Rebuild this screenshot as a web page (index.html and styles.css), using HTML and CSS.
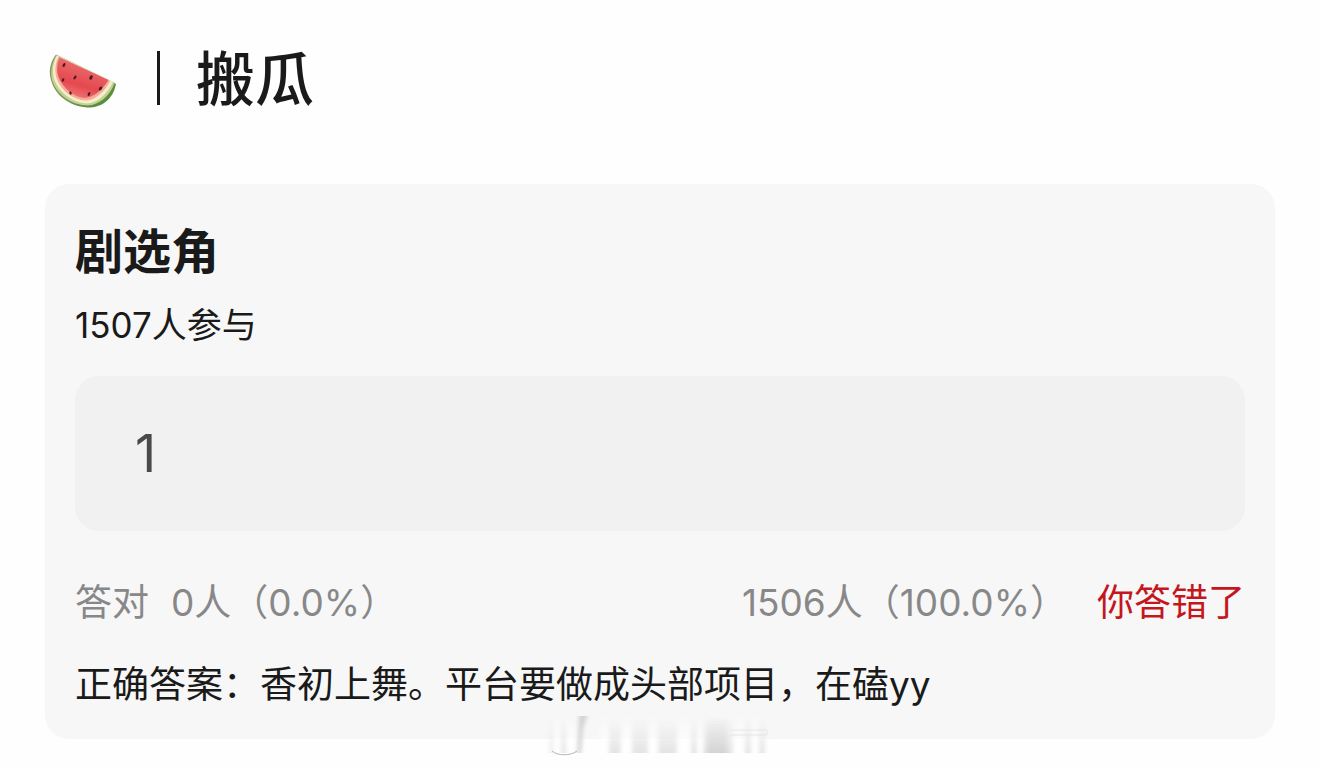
FILE: index.html
```html
<!DOCTYPE html>
<html lang="zh-CN">
<head>
    <meta charset="UTF-8">
    <meta name="viewport" content="width=device-width, initial-scale=1.0">
    <title>搬瓜</title>
    <link rel="stylesheet" href="styles.css">
</head>
<body>
    <header class="page-header">
        <svg class="melon" viewBox="1 -1 80 70" aria-hidden="true">
            <defs>
                <linearGradient id="rind" x1="0" y1="0" x2="1" y2="1">
                    <stop offset="0" stop-color="#8a9a65"/>
                    <stop offset="0.5" stop-color="#739a50"/>
                    <stop offset="1" stop-color="#4a8a30"/>
                </linearGradient>
                <linearGradient id="flesh" x1="0.6" y1="0.2" x2="0.3" y2="1">
                    <stop offset="0" stop-color="#e9696a"/>
                    <stop offset="0.6" stop-color="#e5484f"/>
                    <stop offset="1" stop-color="#f07a74"/>
                </linearGradient>
            </defs>
            <path fill="url(#rind)" d="M12 8.500C7 15 4 24 7 34C11 49 25 60 43 61.500C57 62 69 54 72 38L67 35Z"/>
            <path fill="#c3cf95" d="M12.500 9C8 17 6 25 8 34C13 49 27 59 44 59.500C55 59 66 50 70.500 37Z"/>
            <path fill="#f7edc9" d="M13 9.500C9 17 8 25 10 33C15 47 29 57 43 57.500C54 57 64 47 69 36Z"/>
            <path fill="#f5aa9a" d="M14.500 10.500C11 18 10.500 25 12.500 32C17.500 45 29 54 42 54.500C52 54 61 45 66 35Z"/>
            <path fill="url(#flesh)" d="M15.500 11.500C12.500 19 12.500 25 14.500 31C19.500 43 30 51.500 41 52C50 51.500 59 43 64.500 34Z"/>
            <g fill="#4c1d20">
                <ellipse cx="20" cy="19" rx="1.300" ry="2.200" transform="rotate(25 20 19)"/>
                <ellipse cx="31" cy="31.500" rx="1.200" ry="2.200" transform="rotate(30 31 31.500)"/>
                <ellipse cx="47" cy="31.500" rx="1.500" ry="2.400" transform="rotate(25 47 31.500)"/>
                <ellipse cx="19" cy="34" rx="1.100" ry="1.900" transform="rotate(25 19 34)"/>
                <ellipse cx="56.500" cy="42.500" rx="1.400" ry="2.300" transform="rotate(40 56.500 42.500)"/>
                <ellipse cx="45" cy="48" rx="1.200" ry="2.100" transform="rotate(25 45 48)"/>
                <ellipse cx="26.500" cy="47" rx="1.100" ry="1.700" transform="rotate(-25 26.500 47)"/>
            </g>
        </svg>
        <span class="divider"></span>
        <h1>搬瓜</h1>
    </header>

    <main class="card">
        <h2><label for="answer">剧选角</label></h2>
        <p class="joined">1507人参与</p>
        <input class="answer-box" id="answer" type="text" value="1" readonly>
        <div class="stats">
            <span>答对</span>
            <span>0人（0.0%）</span>
            <span class="wrong-count">1506人（100.0%）</span>
            <strong class="verdict">你答错了</strong>
        </div>
        <p class="correct">正确答案：香初上舞。平台要做成头部项目，在磕yy</p>

        <!-- faded watermark over the lower edge -->
        <svg class="watermark" viewBox="0 0 230 50" aria-hidden="true">
            <defs>
                <linearGradient id="fade" x1="0" y1="0" x2="0" y2="1">
                    <stop offset="0" stop-color="#bbb" stop-opacity="0"/>
                    <stop offset="1" stop-color="#bbb" stop-opacity="0.4"/>
                </linearGradient>
                <linearGradient id="glow" x1="0" y1="0" x2="0" y2="1">
                    <stop offset="0" stop-color="#fff" stop-opacity="0"/>
                    <stop offset="1" stop-color="#fff"/>
                </linearGradient>
                <filter id="soft" x="-20%" y="-20%" width="140%" height="140%">
                    <feGaussianBlur stdDeviation="2 0.400"/>
                </filter>
            </defs>
            <g filter="url(#soft)">
                <path fill="url(#glow)" d="M8 2H34V40C28 46 16 46 8 40Z"/>
                <rect fill="url(#fade)" x="5" y="4" width="3" height="36"/>
                <rect fill="url(#fade)" x="16" y="4" width="5" height="36"/>
                <path fill="#d2d2d2" d="M34 3H42L38 16L36 40H32Z"/>
                <rect fill="url(#glow)" x="55" y="2" width="164" height="38"/>
                <rect fill="url(#fade)" x="64" y="4" width="12" height="36"/>
                <rect fill="url(#fade)" x="87" y="4" width="16" height="36"/>
                <rect fill="url(#fade)" x="113" y="4" width="19" height="36"/>
                <rect fill="url(#fade)" x="146" y="4" width="6" height="36"/>
                <rect fill="url(#fade)" x="158" y="4" width="30" height="36"/>
                <rect fill="url(#fade)" x="162" y="2" width="20" height="38"/>
                <rect fill="url(#fade)" x="200" y="4" width="6" height="36"/>
                <rect fill="url(#fade)" x="214" y="4" width="6" height="36"/>
            </g>
            <path fill="none" stroke="#b5b5b5" d="M7 38C12 43 26 43 32 38"/>
            <path fill="none" stroke="#e6e6e6" d="M185 17H222V22H185"/>
        </svg>
    </main>
</body>
</html>
```
FILE: styles.css
```css
* {
    margin: 0;
    padding: 0;
    box-sizing: border-box;
}

body {
    font-family: Inter, "Noto Sans CJK SC", sans-serif;
    background: #fefefe;
    color: #1a1a1a;
    padding: 40px 45px 28px;
}

.page-header {
    display: flex;
    align-items: center;
    height: 80px;
    margin-bottom: 64px;
}

.melon {
    width: 80px;
    height: 70px;
}

.divider {
    width: 3px;
    height: 54px;
    margin: 0 36px 4px 32px;
    background: #1a1a1a;
}

h1 {
    font-size: 59px;
    font-weight: 500;
    line-height: 80px;
}

.card {
    position: relative;
    background: #f7f7f7;
    border-radius: 24px;
    padding: 40px 30px 30px;
}

h2 {
    font-size: 48px;
    font-weight: 700;
    line-height: 56px;
}

.joined {
    font-size: 35px;
    line-height: 44px;
    margin-top: 23px;
}

.answer-box {
    display: block;
    width: 100%;
    height: 155px;
    margin-top: 29px;
    padding: 0 60px;
    border: none;
    border-radius: 24px;
    outline: none;
    background: #f1f1f1;
    color: #4a4a4a;
    font-family: inherit;
    font-size: 52px;
}

.stats {
    display: flex;
    margin-top: 48px;
    color: #888;
    font-size: 37px;
    line-height: 48px;
    white-space: nowrap;
}

.stats span:first-child {
    margin-right: 22px;
}

.wrong-count {
    margin-left: auto;
}

.verdict {
    margin-left: 30px;
    color: #c4161c;
    font-weight: 400;
}

.correct {
    margin-top: 34px;
    font-size: 37px;
    line-height: 48px;
}

.watermark {
    position: absolute;
    left: 50%;
    bottom: -24px;
    width: 230px;
    height: 50px;
    transform: translateX(-50%);
}
```
